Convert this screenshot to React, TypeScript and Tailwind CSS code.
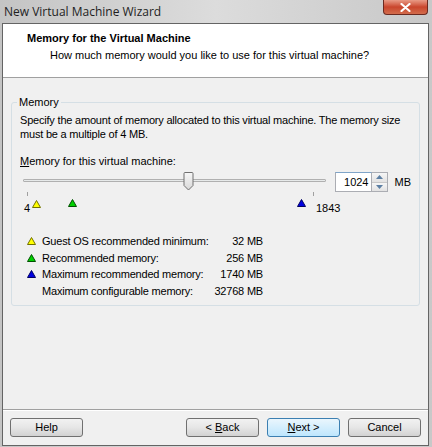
const Tri: React.FC<{ color: string; stroke: string }> = ({ color, stroke }) => (
    <svg width="9" height="8" viewBox="0 0 9 8" className="shrink-0">
        <polygon points="4.5,0.5 8.5,7.5 0.5,7.5" fill={color} stroke={stroke} strokeWidth="1" />
    </svg>
);

const Button: React.FC<{ children: React.ReactNode; primary?: boolean; className?: string }> = ({
    children,
    primary,
    className,
}) => (
    <button
        className={
            'h-[19px] w-[73px] rounded-[3px] border text-[11px] leading-none ' +
            (primary
                ? 'border-[#3c7fb1] bg-gradient-to-b from-[#eaf6fd] to-[#bee6fd] '
                : 'border-[#707070] bg-gradient-to-b from-[#f2f2f2] via-[#e6e6e6] to-[#d2d2d2] ') +
            (className ?? '')
        }
    >
        {children}
    </button>
);

const App: React.FC = () => {
    return (
        <div
            className="w-[432px] h-[447px] flex flex-col bg-gradient-to-r from-[#c4c4c4] via-[#dcdcdc] to-[#c8c8c8] select-none text-black"
            style={{ fontFamily: '"Liberation Sans", Arial, sans-serif' }}
        >
            {/* title bar */}
            <div className="h-[23px] flex items-start justify-between shrink-0">
                <span
                    className="pl-[4px] pt-[3px] text-[12px] text-[#1e1e1e]"
                    style={{ fontFamily: '"Open Sans", "Liberation Sans", sans-serif' }}
                >
                    New Virtual Machine Wizard
                </span>
                <div className="mr-[4px] w-[45px] h-[15px] rounded-b-[4px] border border-t-0 border-[#6b2a20] bg-gradient-to-b from-[#e89a86] via-[#c9452c] to-[#d26c4c] flex items-center justify-center">
                    <svg width="11" height="9" viewBox="0 0 11 9">
                        <path d="M1.5 1 L9.5 8 M9.5 1 L1.5 8" stroke="#fff" strokeWidth="2.2" strokeLinecap="round" />
                    </svg>
                </div>
            </div>

            {/* client area */}
            <div className="flex-1 ml-[2px] mr-[3px] mb-[1px] border border-[#646464] bg-[#f0f0f0] flex flex-col">
                <div className="h-[54px] bg-white border-b border-[#a0a0a0] pl-[24px] pt-[8px] shrink-0">
                    <div className="text-[11px] font-bold leading-[13px]">Memory for the Virtual Machine</div>
                    <div className="pl-[23px] pt-[4px] text-[11px] leading-[13px]">
                        How much memory would you like to use for this virtual machine?
                    </div>
                </div>

                {/* group box */}
                <div className="mx-[8px] mt-[24px] h-[204px] relative border border-[#d5dfe5] rounded-[3px] px-[8px] pt-[10px] text-[11px]">
                    <span className="absolute -top-[8px] left-[5px] px-[2px] bg-[#f0f0f0] leading-[14px]">
                        Memory
                    </span>
                    <p className="leading-[14px] tracking-[-0.2px]">
                        Specify the amount of memory allocated to this virtual machine. The memory size must be a
                        multiple of 4 MB.
                    </p>
                    <div className="mt-[13px] leading-[14px]">
                        <span className="underline">M</span>emory for this virtual machine:
                    </div>

                    {/* slider row */}
                    <div className="mt-[2px] flex items-center h-[24px]">
                        <div className="w-[310px] h-[24px] relative">
                            <div className="absolute left-[3px] right-[4px] top-[9px] h-[3px] border border-[#b0b0b0] bg-[#e7eaea] rounded-[1px]" />
                            <svg className="absolute left-[163px] top-[2px]" width="11" height="19" viewBox="0 0 11 19">
                                <defs>
                                    <linearGradient id="thumb" x1="0" y1="0" x2="0" y2="1">
                                        <stop offset="0" stopColor="#f7f7f7" />
                                        <stop offset="1" stopColor="#d8d8d8" />
                                    </linearGradient>
                                </defs>
                                <path d="M1 1.5 Q1 0.5 2 0.5 H9 Q10 0.5 10 1.5 V13.5 L5.5 18 L1 13.5 Z" fill="url(#thumb)" stroke="#707070" />
                            </svg>
                            <div className="absolute left-[7px] top-[22px] w-px h-[4px] bg-[#a0a0a0]" />
                            <div className="absolute left-[293px] top-[22px] w-px h-[4px] bg-[#a0a0a0]" />
                        </div>
                        <div className="flex items-center ml-[5px]">
                            <div className="w-[37px] h-[20px] border border-[#abadb3] border-t-[#7fa4c8] bg-white flex items-center justify-end pr-[2px]">
                                1024
                            </div>
                            <div className="w-[16px] h-[20px] flex flex-col border border-[#abadb3] border-l-0 bg-[#f4f4f4]">
                                <div className="flex-1 flex items-center justify-center border-b border-[#c8c8c8] bg-gradient-to-b from-[#f6f6f6] to-[#e2e2e2]">
                                    <svg width="7" height="4" viewBox="0 0 7 4">
                                        <polygon points="3.5,0 7,4 0,4" fill="#5c7fa3" />
                                    </svg>
                                </div>
                                <div className="flex-1 flex items-center justify-center bg-gradient-to-b from-[#f6f6f6] to-[#e2e2e2]">
                                    <svg width="7" height="4" viewBox="0 0 7 4">
                                        <polygon points="0,0 7,0 3.5,4" fill="#5c7fa3" />
                                    </svg>
                                </div>
                            </div>
                            <span className="ml-[7px]">MB</span>
                        </div>
                    </div>

                    {/* marker row */}
                    <div className="mt-[5px] h-[14px] relative leading-[14px]">
                        <span className="absolute left-[4px] top-[2px]">4</span>
                        <span className="absolute left-[12px] top-[1px]">
                            <Tri color="#ffff00" stroke="#707000" />
                        </span>
                        <span className="absolute left-[48px] top-[0px]">
                            <Tri color="#00d000" stroke="#005000" />
                        </span>
                        <span className="absolute left-[277px] top-[0px]">
                            <Tri color="#0000e0" stroke="#000060" />
                        </span>
                        <span className="absolute left-[296px] top-[2px]">1843</span>
                    </div>

                    {/* legend */}
                    <div className="mt-[20px] w-[243px] flex flex-col leading-[16.5px] whitespace-nowrap tracking-[-0.2px]">
                        {[
                            { t: 'Guest OS recommended minimum:', v: '32 MB', tri: <Tri color="#ffff00" stroke="#707000" /> },
                            { t: 'Recommended memory:', v: '256 MB', tri: <Tri color="#00d000" stroke="#005000" /> },
                            { t: 'Maximum recommended memory:', v: '1740 MB', tri: <Tri color="#0000e0" stroke="#000060" /> },
                            { t: 'Maximum configurable memory:', v: '32768 MB', tri: null },
                        ].map((r) => (
                            <div key={r.t} className="flex items-center">
                                <span className="w-[22px] pl-[7px] flex shrink-0">{r.tri}</span>
                                <span className="flex-1">{r.t}</span>
                                <span>{r.v}</span>
                            </div>
                        ))}
                    </div>
                </div>

                <div className="flex-1" />
                <div className="h-[2px] border-t border-[#a0a0a0] bg-white" />
                <div className="h-[34px] flex items-center px-[7px] pb-[2px]">
                    <Button>Help</Button>
                    <div className="flex-1" />
                    <Button>
                        &lt; <span className="underline">B</span>ack
                    </Button>
                    <Button primary className="ml-[8px]">
                        <span className="underline">N</span>ext &gt;
                    </Button>
                    <Button className="ml-[8px]">Cancel</Button>
                </div>
            </div>
        </div>
    );
};

export default App;
